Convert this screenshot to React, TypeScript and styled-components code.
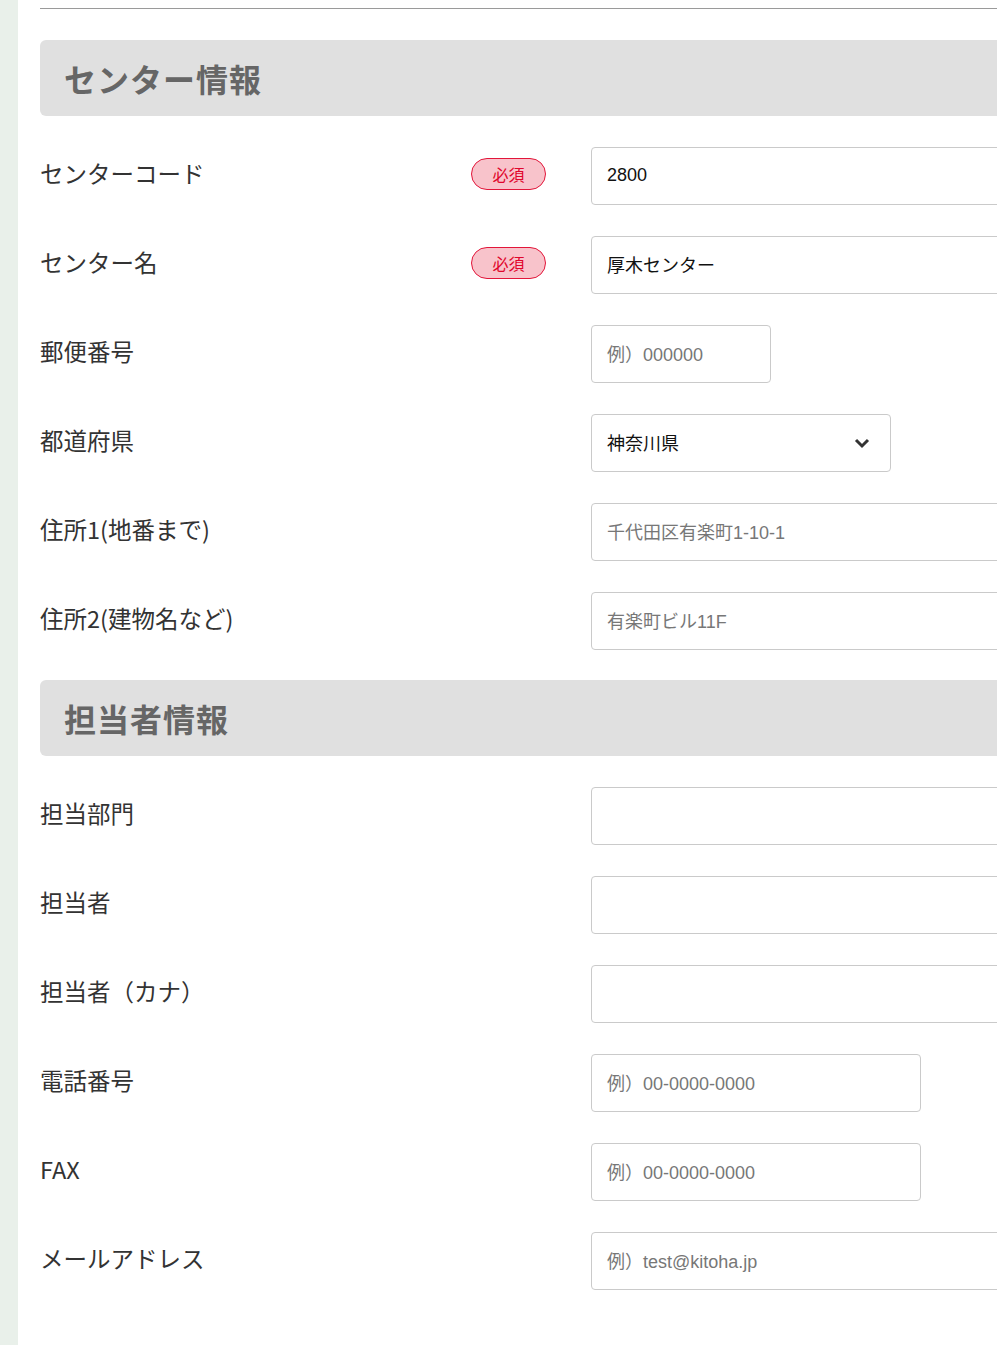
import styled, { createGlobalStyle } from "styled-components"

const GlobalStyle = createGlobalStyle`
  html, body {
    margin: 0;
    padding: 0;
    background: #fff;
    overflow-x: hidden;
  }
  body {
    font-family: "Noto Sans", "Noto Sans CJK JP", sans-serif;
    color: #333;
  }
`

const Page = styled.div`
  display: flex;
  min-height: 1345px;
  width: 1200px;
`
const SideStrip = styled.div`
  width: 18px;
  flex-shrink: 0;
  background-color: #e9f0ea;
`
const Main = styled.div`
  flex: 1;
  display: flex;
  flex-direction: column;
  gap: 31px;
  padding: 8px 0 40px 22px;
`
const TopRule = styled.div`
  border-top: 1px solid #9a9a9a;
`
const SectionTitle = styled.h2<{ $tight?: boolean }>`
  margin: ${(p) => (p.$tight ? "-1px 0 0" : "0")};
  height: 76px;
  display: flex;
  align-items: center;
  padding-left: 24px;
  background-color: #e0e0e0;
  border-radius: 6px 0 0 6px;
  font-family: "Noto Sans CJK JP", sans-serif;
  font-size: 32px;
  font-weight: 700;
  color: #666;
  letter-spacing: 1px;
`
const Row = styled.div`
  display: grid;
  grid-template-columns: 431px 120px 1fr;
  align-items: center;
  height: 58px;
`
const Label = styled.div`
  font-family: "Noto Sans CJK JP", sans-serif;
  font-size: 23.5px;
  color: #333;
  margin-top: -6px;
`
const Badge = styled.span`
  display: inline-flex;
  align-items: center;
  justify-content: center;
  width: 75px;
  height: 32px;
  box-sizing: border-box;
  border: 1px solid #e2163a;
  border-radius: 16px;
  background-color: #f8c3cb;
  color: #e0062c;
  font-family: "Noto Sans CJK JP", sans-serif;
  font-size: 16px;
  margin-top: -5px;
`
const Field = styled.div<{ $width?: number }>`
  position: relative;
  box-sizing: border-box;
  width: ${(p) => (p.$width ? `${p.$width}px` : "560px")};
  height: 58px;
  border: 1px solid #cacaca;
  border-radius: 4px;
  display: flex;
  align-items: center;
  padding: 0 15px;
  font-family: "Liberation Sans", "Noto Sans CJK JP", sans-serif;
  font-size: 18px;
`
const Value = styled.span<{ $placeholder?: boolean }>`
  color: ${(p) => (p.$placeholder ? "#777" : "#111")};
  margin-top: -2px;
`
const Chevron = styled.svg`
  position: absolute;
  right: 20px;
  top: 50%;
  margin-top: -5px;
`

type Item = {
  label: string
  required?: boolean
  value?: string
  placeholder?: string
  width?: number
  select?: boolean
}

const centerItems: Item[] = [
  { label: "センターコード", required: true, value: "2800" },
  { label: "センター名", required: true, value: "厚木センター" },
  { label: "郵便番号", placeholder: "例）000000", width: 180 },
  { label: "都道府県", value: "神奈川県", width: 300, select: true },
  { label: "住所1(地番まで)", placeholder: "千代田区有楽町1-10-1" },
  { label: "住所2(建物名など)", placeholder: "有楽町ビル11F" },
]

const staffItems: Item[] = [
  { label: "担当部門" },
  { label: "担当者" },
  { label: "担当者（カナ）" },
  { label: "電話番号", placeholder: "例）00-0000-0000", width: 330 },
  { label: "FAX", placeholder: "例）00-0000-0000", width: 330 },
  { label: "メールアドレス", placeholder: "例）test@kitoha.jp" },
]

const FormRow = ({ item }: { item: Item }) => (
  <Row>
    <Label>{item.label}</Label>
    <div>{item.required && <Badge>必須</Badge>}</div>
    <Field $width={item.width}>
      {item.value && <Value>{item.value}</Value>}
      {!item.value && item.placeholder && <Value $placeholder>{item.placeholder}</Value>}
      {item.select && (
        <Chevron width="16" height="11" viewBox="0 0 16 11">
          <path d="M2 2 L8 8 L14 2" fill="none" stroke="#333" strokeWidth="3" />
        </Chevron>
      )}
    </Field>
  </Row>
)

export default function App() {
  return (
    <>
      <GlobalStyle />
      <Page>
        <SideStrip />
        <Main>
          <TopRule />
          <SectionTitle>センター情報</SectionTitle>
          {centerItems.map((item) => (
            <FormRow key={item.label} item={item} />
          ))}
          <SectionTitle $tight>担当者情報</SectionTitle>
          {staffItems.map((item) => (
            <FormRow key={item.label} item={item} />
          ))}
        </Main>
      </Page>
    </>
  )
}
